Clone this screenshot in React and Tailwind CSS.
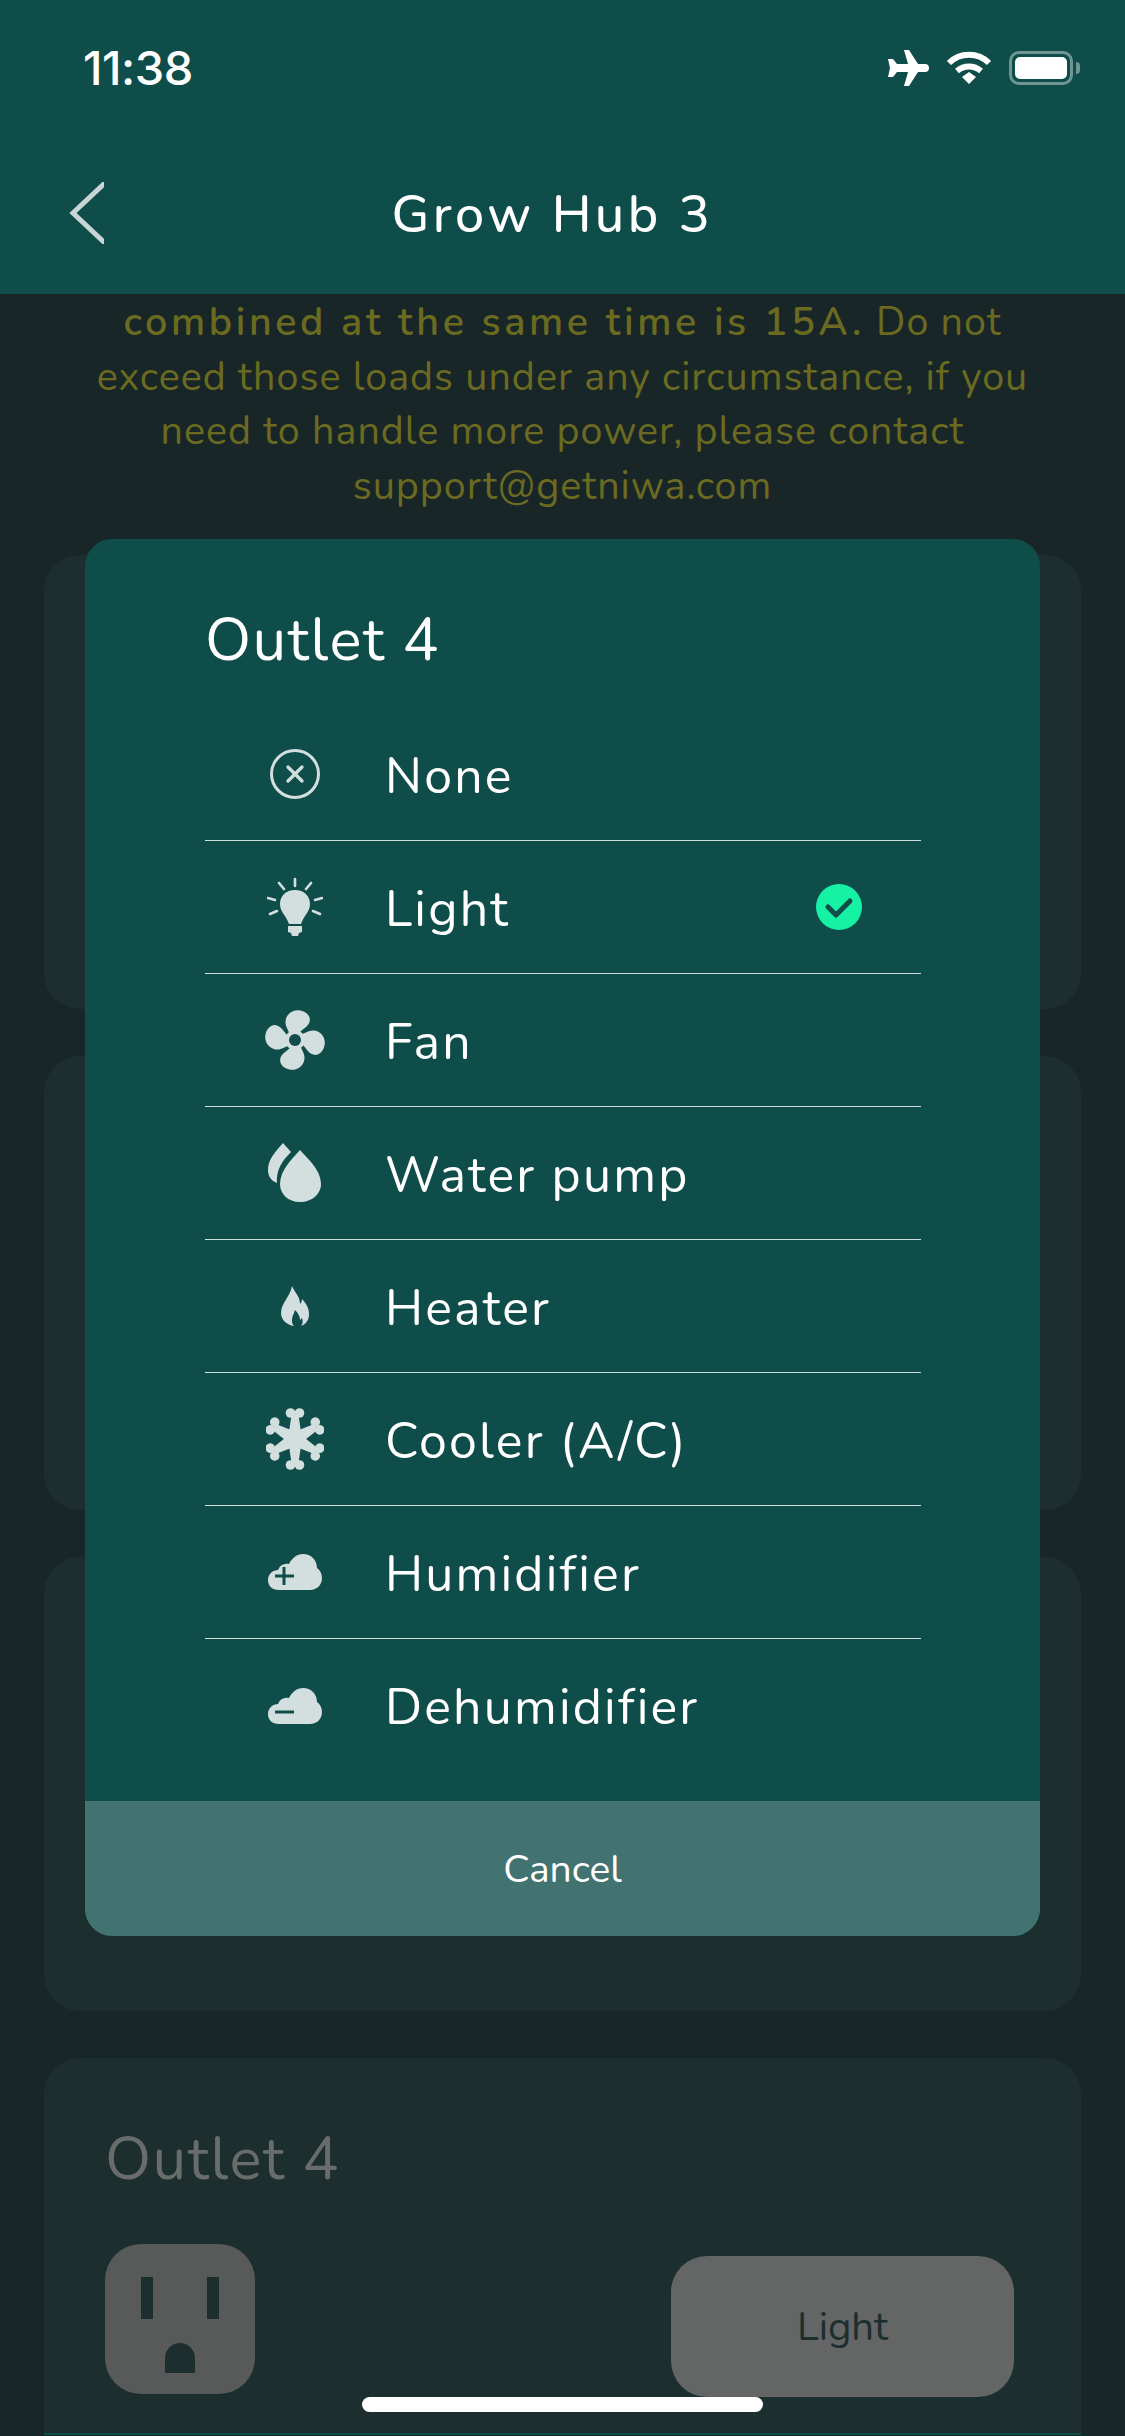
import React from "react";
import { X } from "lucide-react";

const font = "font-['Nunito','Noto_Sans','Open_Sans',sans-serif]";

const Bulb = () => (
  <svg width="56" height="60" viewBox="0 0 56 60" fill="#d3dfde">
    <path d="M28 13c-9 0-15 6-15 14 0 8 6 11 9 20h12c3-9 9-12 9-20 0-8-6-14-15-14z" />
    <path d="M21 49h14v6l-3 1-1 3h-6l-1-3-3-1z" />
    <g stroke="#d3dfde" strokeWidth="2.6" strokeLinecap="round">
      <path d="M28 2v7M12 6l5 6M44 6l-5 6M1 21l7 2M55 21l-7 2M3 37l7-3M53 37l-7-3" />
    </g>
  </svg>
);

const Fan = () => {
  const blade = "M24 26C22 20 18 18 18 12 18 5 24 0 30 0c7 0 12 4 12 9 0 7-8 9-10 17z";
  return (
    <svg width="60" height="60" viewBox="0 0 60 60" fill="#d3dfde">
      <g transform="rotate(8 30 30)">
        <path d={blade} />
        <path d={blade} transform="rotate(90 30 30)" />
        <path d={blade} transform="rotate(180 30 30)" />
        <path d={blade} transform="rotate(270 30 30)" />
      </g>
      <circle cx="30" cy="30" r="10" />
      <circle cx="30" cy="30" r="6" fill="#0f4d4a" />
    </svg>
  );
};

const Drops = () => (
  <svg width="56" height="60" viewBox="0 0 56 60" fill="#d3dfde">
    <path d="M33 7c8 9 21 20 21 34 0 10-9 18-21 18S13 51 13 41C13 27 25 16 33 7z" />
    <path d="M16 0l8 9C15 18 9 27 10 40 4 38 1 33 1 27 1 16 9 8 16 0z" />
  </svg>
);

const Flame = () => (
  <svg width="28" height="40" viewBox="0 0 28 40" fill="#d3dfde">
    <path
      fillRule="evenodd"
      d="M11 0c3 7 8 10 8 18 1-1 2-3 2-5 4 4 7 9 7 15 0 6-3 10-8 12 2-2 2-5 1-8l-2 2c0-4-2-7-5-10-1 4-3 6-3 10 0 2 0 4 2 6-7-1-13-6-13-13C0 17 9 11 11 0z"
    />
  </svg>
);

const Snow = () => (
  <svg width="58" height="62" viewBox="0 0 58 62" fill="#d3dfde">
    {[0, 60, 120, 180, 240, 300].map((a) => (
      <g key={a} transform={`rotate(${a} 29 31)`}>
        <path d="M22 31L25.500 7h7L36 31z" />
        <circle cx="24.500" cy="5" r="4.800" />
        <circle cx="33.500" cy="5" r="4.800" />
      </g>
    ))}
  </svg>
);

const Cloud = ({ plus }) => (
  <svg width="54" height="36" viewBox="0 0 54 36">
    <path
      fill="#d3dfde"
      d="M11 36C4 36 0 32 0 26c0-6 5-10 10-10 2-5 6-7 11-6 3-6 8-10 14-10 8 0 14 6 14 14 3 2 5 6 5 10 0 7-5 12-12 12z"
    />
    <path stroke="#0f4d4a" strokeWidth="3" d={plus ? "M7 22h19M16 13v18" : "M7 24h19"} />
  </svg>
);

const Socket = () => (
  <div className="flex h-[150px] w-[150px] flex-col items-center rounded-[36px] bg-[#585a5a] pt-[33px]">
    <div className="flex gap-[54px]">
      <div className="h-[42px] w-[12px] bg-[#1d2e2f]" />
      <div className="h-[42px] w-[12px] bg-[#1d2e2f]" />
    </div>
    <div className="mt-[24px] h-[30px] w-[30px] rounded-t-full bg-[#1d2e2f]" />
  </div>
);

const options = [
  { name: "None", icon: <div className="flex h-[50px] w-[50px] items-center justify-center rounded-full border-[3px] border-[#d3dfde]"><X size={28} color="#d3dfde" strokeWidth={2.8} /></div> },
  { name: "Light", icon: <Bulb />, selected: true },
  { name: "Fan", icon: <Fan /> },
  { name: "Water pump", icon: <Drops /> },
  { name: "Heater", icon: <Flame /> },
  { name: "Cooler (A/C)", icon: <Snow /> },
  { name: "Humidifier", icon: <Cloud plus /> },
  { name: "Dehumidifier", icon: <Cloud /> },
];

const App = () => {
  return (
    <div className={`relative h-[2436px] w-[1125px] overflow-hidden bg-[#192628] ${font}`}>
      {/* top bar */}
      <header className="h-[294px] bg-[#0f4d4a] text-white">
        <div className="flex items-center justify-between pl-[83px] pr-[45px] pt-[42px]">
          <span className="text-[47px] leading-[52px] font-medium font-['Inter',sans-serif] tracking-[-0.5px]">11:38</span>
          <div className="flex items-center gap-[17px]">
            <svg width="42" height="36" viewBox="0 0 42 36" fill="#fff">
              <path d="M17 0l5 0 9 14h7c3 0 4 2 4 4s-1 4-4 4h-7l-9 14h-5l4-14H10l-4 5H1l2-9-2-9h5l4 5h11z" />
            </svg>
            <svg width="46" height="34" viewBox="0 0 46 34" fill="none" stroke="#fff" strokeWidth="6">
              <path d="M3 12c11-11 29-11 40 0M11 20c7-6 17-6 24 0" />
              <path d="M16 26l7-5 7 5-7 7z" fill="#fff" stroke="none" />
            </svg>
            <div className="flex items-center">
              <div className="h-[34px] w-[64px] rounded-[10px] border-[3px] border-[#6f9492] p-[3px]">
                <div className="h-full w-full rounded-[5px] bg-white" />
              </div>
              <div className="ml-[3px] h-[12px] w-[4px] rounded-r-full bg-[#6f9492]" />
            </div>
          </div>
        </div>
        <div className="relative mt-[89px] flex h-[64px] items-center justify-center pr-[20px]">
          <svg className="absolute left-[68px] top-[-1px]" width="36" height="62" viewBox="0 0 36 62" fill="none" stroke="#c9d6d5" strokeWidth="5">
            <path d="M38 0L5 31l33 31" />
          </svg>
          <h1 className="text-[52px] font-medium tracking-[3.500px]">Grow Hub 3</h1>
        </div>
      </header>

      {/* page behind the dialog */}
      <main className="px-[44px]">
        <p className="px-[36px] pt-[1px] text-center text-[39.500px] leading-[54.500px] tracking-[1px] text-[#6b6a21]">
          <span className="font-semibold tracking-[3.600px]">combined at the same time is 15A.</span> Do not exceed those loads under any circumstance, if you need to handle more power, please contact support@getniwa.com
        </p>
        <div className="mt-[42px] flex flex-col gap-[47px]">
          <div className="h-[454px] rounded-[36px] bg-[#1d2e2f]" />
          <div className="h-[454px] rounded-[36px] bg-[#1d2e2f]" />
          <div className="h-[454px] rounded-[36px] bg-[#1d2e2f]" />
          <section className="h-[375px] rounded-[36px] rounded-b-none bg-[#1d2e2f] px-[61px] pt-[66px]">
            <h2 className="text-[60px] leading-[70px] tracking-[1.500px] text-[#686c6b]">Outlet 4</h2>
            <div className="mt-[50px] flex items-start justify-between pr-[2px]">
              <Socket />
              <div className="mt-[12px] mr-[4px] flex h-[141px] w-[343px] items-center justify-center rounded-[36px] bg-[#646565] text-[40px] text-[#1d2e2f]">
                Light
              </div>
            </div>
          </section>
          <div className="-mt-[47px] h-[2px] bg-[#0f4d4a]" />
        </div>
      </main>

      {/* dialog */}
      <div className="absolute left-[85px] top-[539px] w-[955px] overflow-hidden rounded-[27px] bg-[#0f4d4a] text-white">
        <div className="px-[120px] pt-[62px]">
          <h3 className="text-[60px] leading-[78px] tracking-[1.500px]">Outlet 4</h3>
          <ul className="mt-[29px] w-[716px]">
            {options.map((o, i) => (
              <li
                key={o.name}
                className={`flex h-[133px] items-center ${i < options.length - 1 ? "border-b-[1.5px] border-[#d0dedd]" : ""}`}
              >
                <div className="flex w-[180px] justify-center">{o.icon}</div>
                <span className="pt-[4px] text-[50px] tracking-[2.200px]">{o.name}</span>
                {o.selected && (
                  <svg className="ml-auto mr-[59px]" width="46" height="46" viewBox="0 0 46 46">
                    <circle cx="23" cy="23" r="23" fill="#15f2a4" />
                    <path d="M12 23l8 8 14-14" fill="none" stroke="#0f4d4a" strokeWidth="5" strokeLinecap="round" strokeLinejoin="round" />
                  </svg>
                )}
              </li>
            ))}
          </ul>
        </div>
        <button className="mt-[29px] flex h-[135px] w-full items-center justify-center bg-[#427371] pt-[3px] text-[39px]">
          Cancel
        </button>
      </div>

      {/* home indicator */}
      <div className="absolute bottom-[24px] left-[362px] h-[15px] w-[401px] rounded-full bg-white" />
    </div>
  );
};

export default App;
